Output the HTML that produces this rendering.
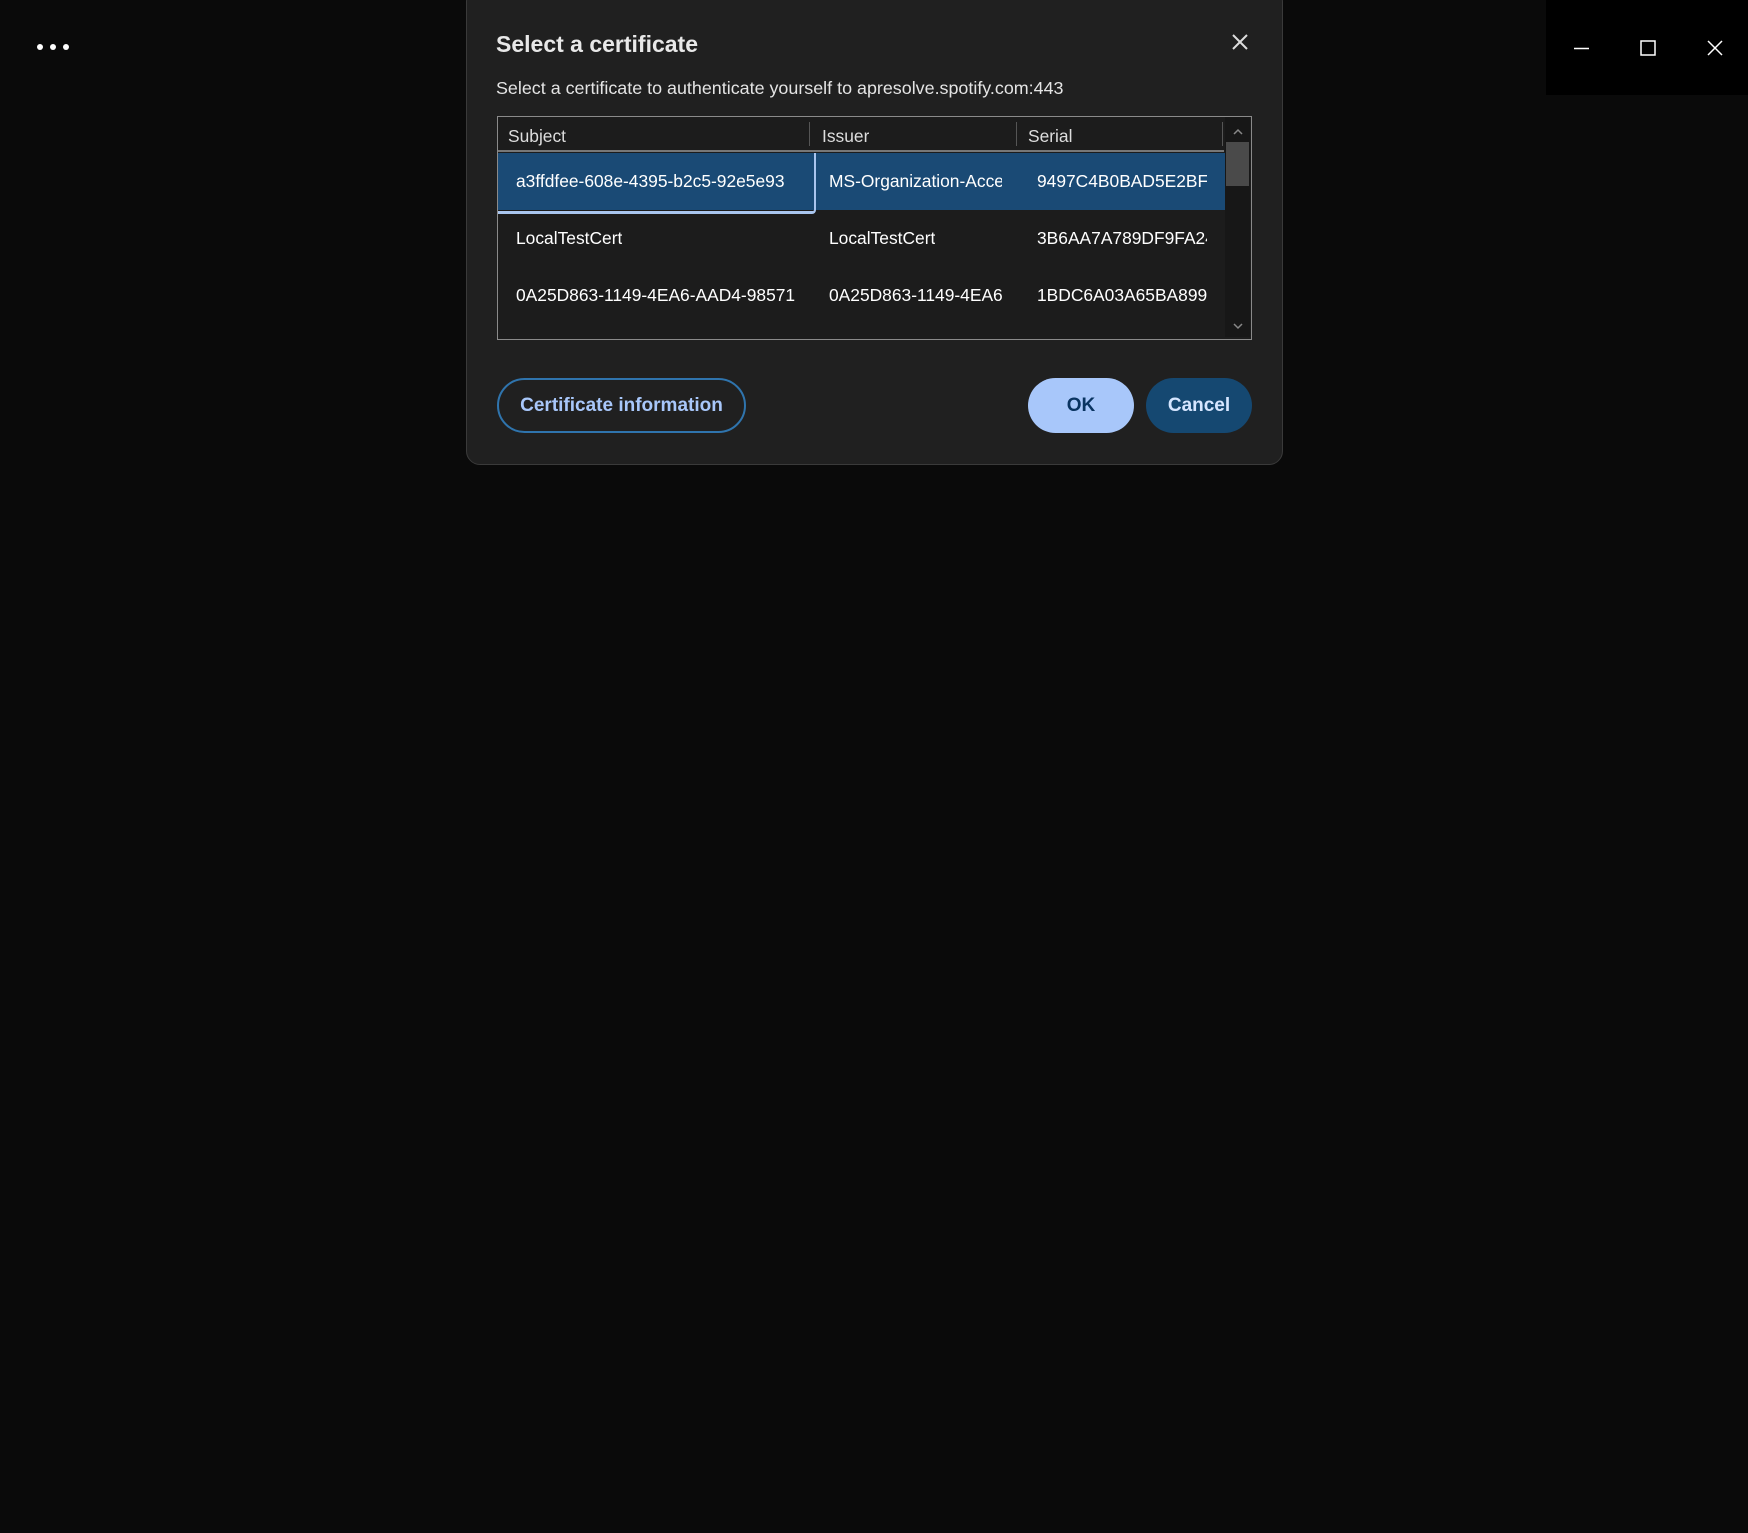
<!DOCTYPE html>
<html><head><style>
body{margin:0;width:1748px;height:1533px;background:#0a0a0a;font-family:"Liberation Sans",sans-serif;position:relative;overflow:hidden;color:#fff}
.a{position:absolute}
.dlg{left:466px;top:-12px;width:815px;height:475px;background:#202020;border:1px solid #3a3a3a;border-radius:14px}
.t{white-space:nowrap;overflow:hidden;font-size:17.4px}
.btn{position:absolute;top:378px;height:55px;border-radius:28px;font-weight:bold;font-size:19px;display:flex;align-items:center;justify-content:center;box-sizing:border-box}
</style></head><body>
<div class="a" style="left:1546px;top:0;width:202px;height:95px;background:#000"></div>
<div class="a" style="left:37px;top:44px;width:6px;height:6px;border-radius:3px;background:#fff;box-shadow:13px 0 #fff,26px 0 #fff"></div>
<svg class="a" style="left:1570px;top:36px" width="160" height="24"><g stroke="#fff" stroke-width="1.5" fill="none"><line x1="4" y1="12.5" x2="19" y2="12.5"/><rect x="71" y="5" width="14" height="14"/><path d="M138 5l14 14M152 5l-14 14"/></g></svg>
<div class="dlg a"></div>
<div class="a" style="left:496px;top:31px;font-size:23px;font-weight:bold;color:#e8e8e8">Select a certificate</div>
<svg class="a" style="left:1231px;top:33px" width="18" height="18"><path d="M2 2l14 14M16 2L2 16" stroke="#ddd" stroke-width="2"/></svg>
<div class="a" style="left:496px;top:78px;font-size:17.9px;color:#e4e4e4">Select a certificate to authenticate yourself to apresolve.spotify.com:443</div>
<div class="a" style="left:497px;top:116px;width:753px;height:222px;border:1px solid #8a8a8a;background:#1c1c1c"></div>
<div class="a" style="left:498px;top:150px;width:726px;height:2px;background:#777"></div>
<div class="a" style="left:809px;top:122px;width:1px;height:24px;background:#555"></div>
<div class="a" style="left:1016px;top:122px;width:1px;height:24px;background:#555"></div>
<div class="a" style="left:1222px;top:122px;width:1px;height:24px;background:#555"></div>
<div class="a t" style="left:508px;top:126px;color:#ddd">Subject</div>
<div class="a t" style="left:822px;top:126px;color:#ddd">Issuer</div>
<div class="a t" style="left:1028px;top:126px;color:#ddd">Serial</div>
<div class="a" style="left:498px;top:153px;width:727px;height:57px;background:#1a4a75"></div>
<div class="a" style="left:498px;top:153px;width:316px;height:58px;border-right:2px solid #a9c5ee;border-bottom:3px solid #a9c5ee;border-radius:0 0 4px 0"></div>
<div class="a t" style="left:516px;top:171px;width:277px">a3ffdfee-608e-4395-b2c5-92e5e93</div>
<div class="a t" style="left:829px;top:171px;width:173px">MS-Organization-Access</div>
<div class="a t" style="left:1037px;top:171px;width:170px">9497C4B0BAD5E2BF4</div>
<div class="a t" style="left:516px;top:228px">LocalTestCert</div>
<div class="a t" style="left:829px;top:228px">LocalTestCert</div>
<div class="a t" style="left:1037px;top:228px;width:170px">3B6AA7A789DF9FA24</div>
<div class="a t" style="left:516px;top:285px;width:280px">0A25D863-1149-4EA6-AAD4-98571</div>
<div class="a t" style="left:829px;top:285px;width:173px">0A25D863-1149-4EA6</div>
<div class="a t" style="left:1037px;top:285px;width:170px">1BDC6A03A65BA8994</div>
<div class="a" style="left:1225px;top:117px;width:25px;height:220px;background:#171717"></div>
<div class="a" style="left:1226px;top:142px;width:23px;height:44px;background:#4a4a4a"></div>
<svg class="a" style="left:1231px;top:124px" width="14" height="210"><g stroke="#888" stroke-width="1.5" fill="none"><path d="M3 10l4-4 4 4M3 200l4 4 4-4"/></g></svg>
<div class="btn" style="left:497px;width:249px;border:2px solid #2f74ad;color:#a8c7fa">Certificate information</div>
<div class="btn" style="left:1028px;width:106px;background:#a8c7fa;color:#0a3461">OK</div>
<div class="btn" style="left:1146px;width:106px;background:#154871;color:#d6e6ff">Cancel</div>
</body></html>
